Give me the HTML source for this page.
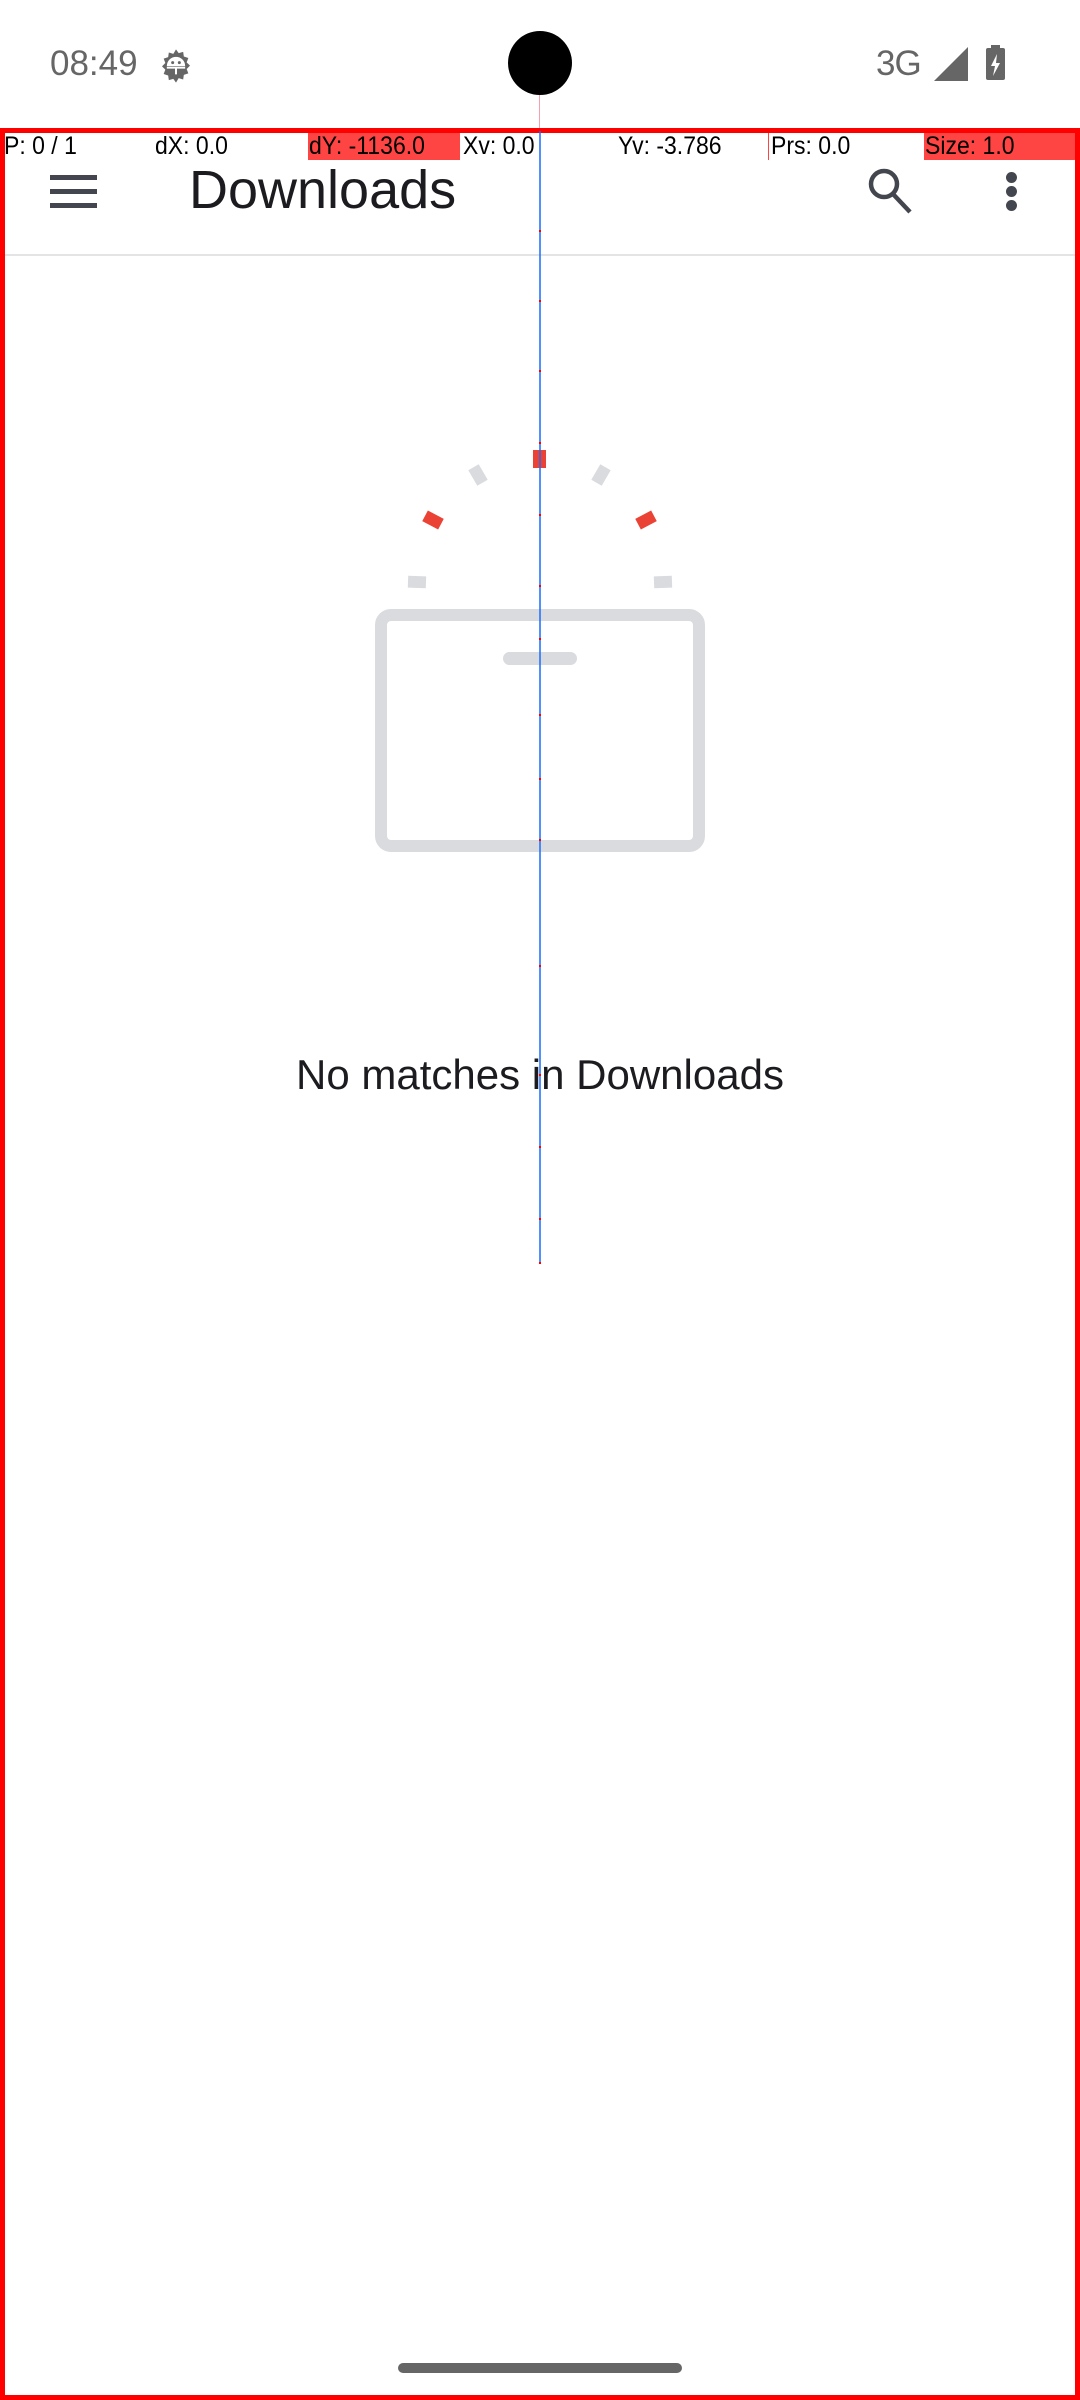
<!DOCTYPE html>
<html><head><meta charset="utf-8"><style>
*{margin:0;padding:0;box-sizing:border-box}
body{width:1080px;height:2400px;position:relative;background:#fff;font-family:"Liberation Sans",sans-serif;overflow:hidden}
.a{position:absolute}
.pt{position:absolute;top:131px;height:30px;font-size:25px;line-height:30px;color:#000;transform:scaleX(.92);transform-origin:left}
</style></head><body>
<div class="a" style="left:50px;top:44px;font-size:35px;color:#666">08:49</div>
<svg class="a" style="left:156px;top:46px" width="40" height="40" viewBox="0 0 24 24"><path fill="#666" d="M12 2l1.6 2.3 2.7-.8.4 2.8 2.7.9-1 2.6 2 2-2 2 1 2.6-2.7.9-.4 2.8-2.7-.8L12 22l-1.6-2.3-2.7.8-.4-2.8-2.7-.9 1-2.6-2-2 2-2-1-2.6 2.7-.9.4-2.8 2.7.8z"/><path fill="#fff" d="M6.5 12a5.5 5.5 0 0 1 11 0z"/><circle cx="10" cy="10" r=".9" fill="#666"/><circle cx="14" cy="10" r=".9" fill="#666"/><path d="M6.5 13h11M12 13v4" stroke="#fff" stroke-width="1.2"/></svg>
<div class="a" style="left:876px;top:44px;font-size:35px;color:#666;letter-spacing:-1px">3G</div>
<svg class="a" style="left:934px;top:47px" width="34" height="34"><path d="M34 0V34H0z" fill="#666"/></svg>
<div class="a" style="left:986px;top:48px;width:19px;height:32px;background:#666;border-radius:2px"></div>
<div class="a" style="left:991px;top:45px;width:9px;height:4px;background:#666"></div>
<svg class="a" style="left:986px;top:52px" width="19" height="26"><path d="M11 2L5 14h4l-2 10 7-13h-4z" fill="#fff"/></svg>
<div class="a" style="left:508px;top:31px;width:64px;height:64px;border-radius:50%;background:#000"></div>
<div class="a" style="left:539px;top:95px;width:1px;height:36px;background:#f5a0b0"></div>
<div class="a" style="left:0;top:128px;width:1080px;height:2272px;border:5px solid #f00"></div>
<div class="a" style="left:308px;top:133px;width:152px;height:27px;background:#f44"></div>
<div class="a" style="left:924px;top:133px;width:151px;height:27px;background:#f44"></div>
<div class="a" style="left:768px;top:133px;width:1px;height:27px;background:#f44"></div>
<div class="pt" style="left:4px">P: 0 / 1</div>
<div class="pt" style="left:155px">dX: 0.0</div>
<div class="pt" style="left:309px">dY: -1136.0</div>
<div class="pt" style="left:463px">Xv: 0.0</div>
<div class="pt" style="left:618px">Yv: -3.786</div>
<div class="pt" style="left:771px">Prs: 0.0</div>
<div class="pt" style="left:925px">Size: 1.0</div>
<div class="a" style="left:50px;top:175px;width:47px;height:5px;background:#44464f"></div>
<div class="a" style="left:50px;top:189px;width:47px;height:5px;background:#44464f"></div>
<div class="a" style="left:50px;top:203px;width:47px;height:5px;background:#44464f"></div>
<div class="a" style="left:189px;top:159px;font-size:54px;color:#1c1b1f">Downloads</div>
<svg class="a" style="left:864px;top:166px" width="52" height="50" viewBox="0 0 52 50"><circle cx="20" cy="18" r="13" fill="none" stroke="#44464f" stroke-width="4.5"/><path d="M29 28l17 18" stroke="#44464f" stroke-width="4.5"/></svg>
<div class="a" style="left:1006px;top:172px;width:11px;height:11px;border-radius:50%;background:#44464f"></div>
<div class="a" style="left:1006px;top:186px;width:11px;height:11px;border-radius:50%;background:#44464f"></div>
<div class="a" style="left:1006px;top:200px;width:11px;height:11px;border-radius:50%;background:#44464f"></div>
<div class="a" style="left:5px;top:254px;width:1070px;height:2px;background:#e4e4e6"></div>
<svg class="a" style="left:0;top:0" width="1080" height="1300">
<rect x="381" y="615" width="318" height="231" rx="10" fill="none" stroke="#dadbde" stroke-width="12"/>
<rect x="503" y="652" width="74" height="13" rx="6.5" fill="#dadbde"/>
<rect x="533" y="450" width="13" height="18" fill="#ea4335"/>
<rect x="-6" y="-9" width="12" height="18" fill="#dadbde" transform="translate(478,475) rotate(-30)"/>
<rect x="-6" y="-9" width="12" height="18" fill="#dadbde" transform="translate(601,475) rotate(30)"/>
<rect x="-6" y="-9" width="12" height="18" fill="#ea4335" transform="translate(433,520) rotate(-62)"/>
<rect x="-6" y="-9" width="12" height="18" fill="#ea4335" transform="translate(646,520) rotate(62)"/>
<rect x="-6" y="-9" width="12" height="18" fill="#dadbde" transform="translate(417,582) rotate(-88)"/>
<rect x="-6" y="-9" width="12" height="18" fill="#dadbde" transform="translate(663,582) rotate(88)"/>
<line x1="540" y1="131" x2="540" y2="1264" stroke="#1a6cff" stroke-width="1.5"/>
<g fill="#f00"><rect x="539" y="230" width="2" height="2"/><rect x="539" y="300" width="2" height="2"/><rect x="539" y="370" width="2" height="2"/><rect x="539" y="442" width="2" height="2"/><rect x="539" y="514" width="2" height="2"/><rect x="539" y="585" width="2" height="2"/><rect x="539" y="638" width="2" height="2"/><rect x="539" y="714" width="2" height="2"/><rect x="539" y="778" width="2" height="2"/><rect x="539" y="839" width="2" height="2"/><rect x="539" y="965" width="2" height="2"/><rect x="539" y="1074" width="2" height="2"/><rect x="539" y="1146" width="2" height="2"/><rect x="539" y="1218" width="2" height="2"/><rect x="539" y="1262" width="2" height="2"/></g>
</svg>
<div class="a" style="left:0;top:1051px;width:1080px;text-align:center;font-size:42px;color:#1c1b1f">No matches in Downloads</div>
<div class="a" style="left:398px;top:2363px;width:284px;height:10px;border-radius:5px;background:#666"></div>
</body></html>
